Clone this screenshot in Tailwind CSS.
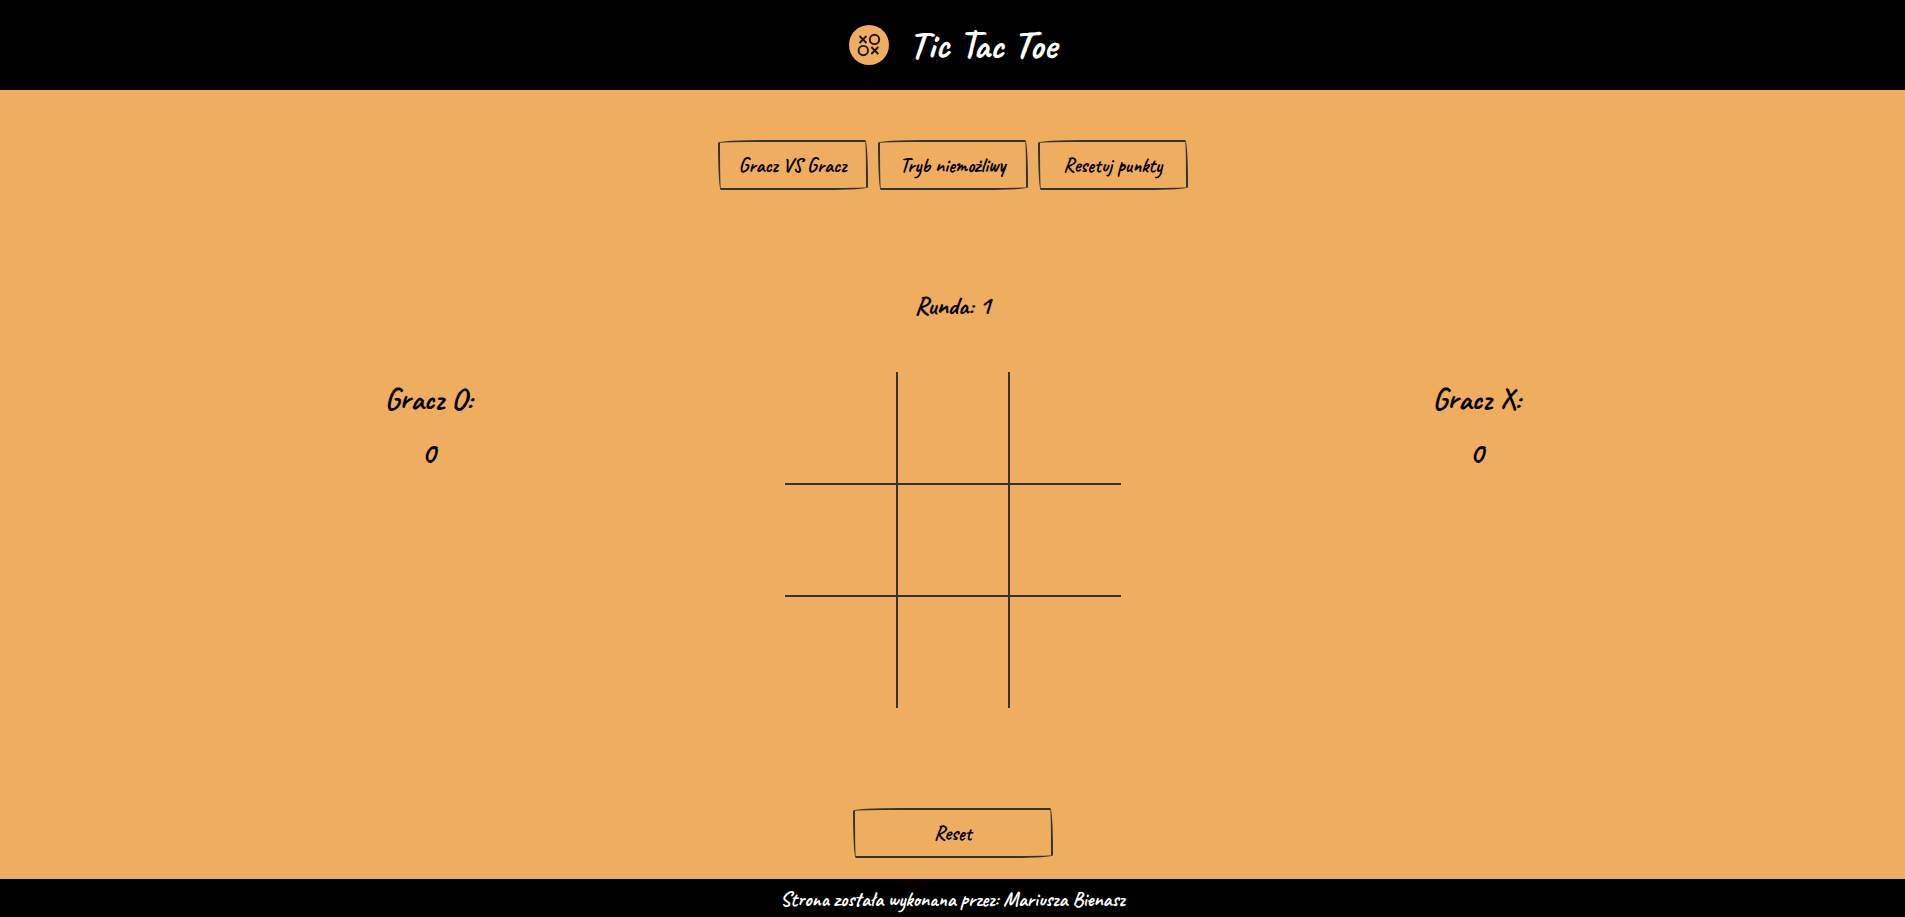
<!DOCTYPE html>
<html lang="pl">
<head>
<meta charset="utf-8">
<meta name="viewport" content="width=device-width, initial-scale=1">
<title>Tic Tac Toe</title>
<script src="https://cdn.jsdelivr.net/npm/@tailwindcss/browser@4"></script>
</head>
<body class="flex min-h-screen flex-col bg-[#efad60] font-[Caveat,Lato,sans-serif] font-bold text-black">
<header class="flex h-[90px] items-center justify-center gap-5 bg-black text-white">
  <svg class="size-10" viewBox="0 0 40 40" fill="none" stroke="#1c1710" stroke-width="1.9" aria-hidden="true">
    <circle cx="20" cy="20" r="20" fill="#efad60" stroke="none"/>
    <path d="M10.500 11l7 7M17.500 11l-7 7M22.300 22l7 7M29.300 22l-7 7"/>
    <circle cx="25.500" cy="14.400" r="4.700"/>
    <circle cx="14.300" cy="25.600" r="4.700"/>
  </svg>
  <h1 class="text-[40px] leading-[50px]">Tic Tac Toe</h1>
</header>
<main class="flex flex-1 flex-col items-center">
  <nav class="mt-[50px] flex flex-wrap justify-center gap-[10px]">
    <button class="h-[50px] w-[150px] rounded-[255px_15px_225px_15px/15px_225px_15px_255px] border-2 border-[#333333] pt-0.5 text-xl">Gracz VS Gracz</button>
    <button class="h-[50px] w-[150px] rounded-[255px_15px_225px_15px/15px_225px_15px_255px] border-2 border-[#333333] pt-0.5 text-xl">Tryb niemożliwy</button>
    <button class="h-[50px] w-[150px] rounded-[255px_15px_225px_15px/15px_225px_15px_255px] border-2 border-[#333333] pt-0.5 text-xl">Resetuj punkty</button>
  </nav>
  <p class="mt-[100px] text-[25px] leading-8">Runda: 1</p>
  <div class="mt-[50px] grid w-full max-w-[1572px] grid-cols-3 justify-items-center">
    <section class="flex flex-col items-center gap-[18px] pt-[9px] text-[30px] leading-9">
      <h2>Gracz O:</h2>
      <p>0</p>
    </section>
    <div class="grid grid-cols-3">
      <button aria-label="Pole 1" class="size-28 border-r border-b border-[#333333]"></button>
      <button aria-label="Pole 2" class="size-28 border-x border-b border-[#333333]"></button>
      <button aria-label="Pole 3" class="size-28 border-b border-l border-[#333333]"></button>
      <button aria-label="Pole 4" class="size-28 border-y border-r border-[#333333]"></button>
      <button aria-label="Pole 5" class="size-28 border border-[#333333]"></button>
      <button aria-label="Pole 6" class="size-28 border-y border-l border-[#333333]"></button>
      <button aria-label="Pole 7" class="size-28 border-t border-r border-[#333333]"></button>
      <button aria-label="Pole 8" class="size-28 border-x border-t border-[#333333]"></button>
      <button aria-label="Pole 9" class="size-28 border-t border-l border-[#333333]"></button>
    </div>
    <section class="flex flex-col items-center gap-[18px] pt-[9px] text-[30px] leading-9">
      <h2>Gracz X:</h2>
      <p>0</p>
    </section>
  </div>
  <button class="mt-[100px] mb-5 h-[50px] w-[200px] rounded-[255px_15px_225px_15px/15px_225px_15px_255px] border-2 border-[#333333] pt-0.5 text-xl">Reset</button>
</main>
<footer class="flex h-[38px] items-center justify-center bg-black pt-1 text-xl text-white">
  <p>Strona została wykonana przez: Mariusza Bienasz</p>
</footer>
</body>
</html>
